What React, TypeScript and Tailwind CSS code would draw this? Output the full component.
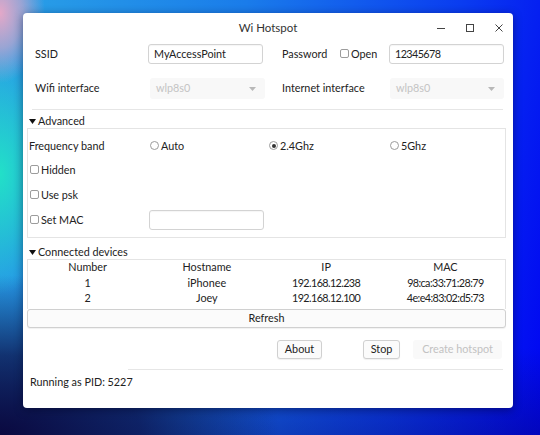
import type { ReactNode } from "react"

// Small native-looking controls used by the hotspot window
function CheckBox({ label }: { label: string }) {
  return (
    <span className="flex items-center">
      <span className="inline-block h-[9px] w-[9px] rounded-[2px] border border-[#9c9c9c] bg-white" />
      <span className="ml-[2px]">{label}</span>
    </span>
  )
}

function Radio({ label, checked = false }: { label: string; checked?: boolean }) {
  return (
    <span className="flex items-center">
      <span className="flex h-[9px] w-[9px] items-center justify-center rounded-full border border-[#9c9c9c] bg-white">
        {checked && <span className="h-[4px] w-[4px] rounded-full bg-[#333]" />}
      </span>
      <span className="ml-[2px]">{label}</span>
    </span>
  )
}

function TextInput({ value = "", className = "" }: { value?: string; className?: string }) {
  return (
    <div
      className={`flex h-[20px] items-center rounded-[3px] border border-[#d3d3d3] bg-white pl-[5px] shadow-[inset_0_1px_1px_rgba(0,0,0,0.04)] ${className}`}
    >
      {value}
    </div>
  )
}

function Combo({ value, className = "" }: { value: string; className?: string }) {
  return (
    <div
      className={`flex h-[21px] items-center justify-between rounded-[3px] bg-[#f8f8f8] pl-[6px] pr-[9px] text-[#c4c4c4] ${className}`}
    >
      <span>{value}</span>
      <svg width="7" height="4" viewBox="0 0 7 4">
        <path d="M0 0h7L3.5 4z" fill="#b8b8b8" />
      </svg>
    </div>
  )
}

function Button({ children, className = "", disabled = false }: { children: ReactNode; className?: string; disabled?: boolean }) {
  return (
    <div
      className={
        disabled
          ? `flex h-[19px] items-center justify-center rounded-[3px] bg-[#f9f9f9] text-[#c2c2c2] ${className}`
          : `flex h-[19px] items-center justify-center rounded-[3px] border border-[#d0d0d0] bg-[#fbfbfb] shadow-[0_1px_1px_rgba(0,0,0,0.06)] ${className}`
      }
    >
      {children}
    </div>
  )
}

function SectionHeader({ label }: { label: string }) {
  return (
    <div className="flex h-[12px] items-center pl-[6px]">
      <svg width="7" height="5" viewBox="0 0 7 5" className="mr-[2px]">
        <path d="M0 0h7L3.5 5z" fill="#111" />
      </svg>
      <span>{label}</span>
    </div>
  )
}

const devices = [
  { number: "1", hostname: "iPhonee", ip: "192.168.12.238", mac: "98:ca:33:71:28:79" },
  { number: "2", hostname: "Joey", ip: "192.168.12.100", mac: "4e:e4:83:02:d5:73" },
]

export default function App() {
  return (
    <div
      className="h-[435px] w-[540px] overflow-hidden pl-[23px] pt-[13px] text-[10.8px] leading-none text-[#222] bg-[image:radial-gradient(ellipse_45px_70px_at_0%_3%,#e4a8c8_0%,rgba(228,168,200,0.6)_50%,transparent_100%),radial-gradient(ellipse_60px_120px_at_0%_40%,#22e0c8_0%,rgba(34,220,200,0.55)_50%,transparent_100%),radial-gradient(ellipse_280px_160px_at_0%_100%,#0a0940_0%,rgba(10,9,64,0.7)_50%,transparent_100%),linear-gradient(180deg,transparent_80%,rgba(8,8,90,0.35)_100%),linear-gradient(100deg,#2aa2e6_0%,#1a7cea_40%,#0a3cf0_75%,#0004f2_100%)]"
      style={{ fontFamily: "Lato, 'Noto Sans', sans-serif" }}
    >
      <div className="flex h-[395px] w-[490px] flex-col rounded-[4px] bg-white shadow-[0_2px_10px_rgba(0,0,30,0.45)]">
        {/* Title bar */}
        <div className="grid h-[30px] grid-cols-[1fr_auto_1fr] items-center">
          <div />
          <span className="text-[11.5px] text-[#333]">Wi Hotspot</span>
          <div className="flex justify-end">
            <span className="flex w-[29px] justify-center">
              <svg width="10" height="10" viewBox="0 0 10 10">
                <path d="M1 5.5h8" stroke="#444" strokeWidth="1" />
              </svg>
            </span>
            <span className="flex w-[29px] justify-center">
              <svg width="10" height="10" viewBox="0 0 10 10">
                <rect x="1.5" y="1.5" width="7" height="7" fill="none" stroke="#444" strokeWidth="1" />
              </svg>
            </span>
            <span className="flex w-[29px] justify-center">
              <svg width="10" height="10" viewBox="0 0 10 10">
                <path d="M1.5 1.5l7 7M8.5 1.5l-7 7" stroke="#444" strokeWidth="1" />
              </svg>
            </span>
          </div>
        </div>

        {/* SSID / password */}
        <div className="mt-[1px] flex items-center pl-[12px]">
          <span className="w-[113px]">SSID</span>
          <TextInput value="MyAccessPoint" className="w-[115px]" />
          <span className="ml-[19px] w-[58px]">Password</span>
          <span className="w-[49px]">
            <CheckBox label="Open" />
          </span>
          <TextInput value="12345678" className="w-[115px] tracking-[-0.6px]" />
        </div>

        {/* Interfaces */}
        <div className="mt-[14px] flex items-center pl-[12px]">
          <span className="w-[115px]">Wifi interface</span>
          <Combo value="wlp8s0" className="w-[115px]" />
          <span className="ml-[17px] w-[108px]">Internet interface</span>
          <Combo value="wlp8s0" className="w-[114px]" />
        </div>

        <div className="ml-[9px] mt-[10px] h-px w-[471px] bg-[#e6e6e6]" />

        {/* Advanced */}
        <div className="mt-[5px]">
          <SectionHeader label="Advanced" />
        </div>
        <div className="ml-[4px] mt-[1px] flex h-[110px] w-[479px] flex-col border border-[#e4e4e4] pl-[1px]">
          <div className="mt-[11px] flex h-[12px] items-center">
            <span className="w-[121px]">Frequency band</span>
            <span className="w-[119px]">
              <Radio label="Auto" />
            </span>
            <span className="w-[121px]">
              <Radio label="2.4Ghz" checked />
            </span>
            <Radio label="5Ghz" />
          </div>
          <div className="mt-[12px] flex h-[12px] items-center pl-[1px]">
            <CheckBox label="Hidden" />
          </div>
          <div className="mt-[13px] flex h-[12px] items-center pl-[1px]">
            <CheckBox label="Use psk" />
          </div>
          <div className="mt-[9px] flex items-center pl-[1px]">
            <span className="w-[119px]">
              <CheckBox label="Set MAC" />
            </span>
            <TextInput className="h-[19px] w-[115px]" />
          </div>
        </div>

        {/* Connected devices */}
        <div className="mt-[8px]">
          <SectionHeader label="Connected devices" />
        </div>
        <div className="ml-[4px] mt-[1px] w-[479px] border border-b-0 border-[#e4e4e4] pb-[3.5px]">
          <div className="grid h-[15.5px] grid-cols-4 items-center text-center">
            <span>Number</span>
            <span>Hostname</span>
            <span>IP</span>
            <span>MAC</span>
          </div>
          {devices.map((d) => (
            <div key={d.number} className="grid h-[15px] grid-cols-4 items-center text-center">
              <span>{d.number}</span>
              <span>{d.hostname}</span>
              <span className="tracking-[-0.6px]">{d.ip}</span>
              <span className="tracking-[-0.6px]">{d.mac}</span>
            </div>
          ))}
        </div>
        <Button className="ml-[4px] w-[479px] bg-[#f8f8f8]">Refresh</Button>

        {/* Actions */}
        <div className="mt-[12px] flex items-center">
          <Button className="ml-[254px] w-[45px]">About</Button>
          <Button className="ml-[41px] w-[37px]">Stop</Button>
          <Button disabled className="ml-[13px] w-[89px]">
            Create hotspot
          </Button>
        </div>

        <div className="ml-[105px] mt-[10px] h-px w-[375px] bg-[#e6e6e6]" />

        <div className="mt-[6px] flex h-[12px] items-center pl-[7px]">Running as PID: 5227</div>
      </div>
    </div>
  )
}
